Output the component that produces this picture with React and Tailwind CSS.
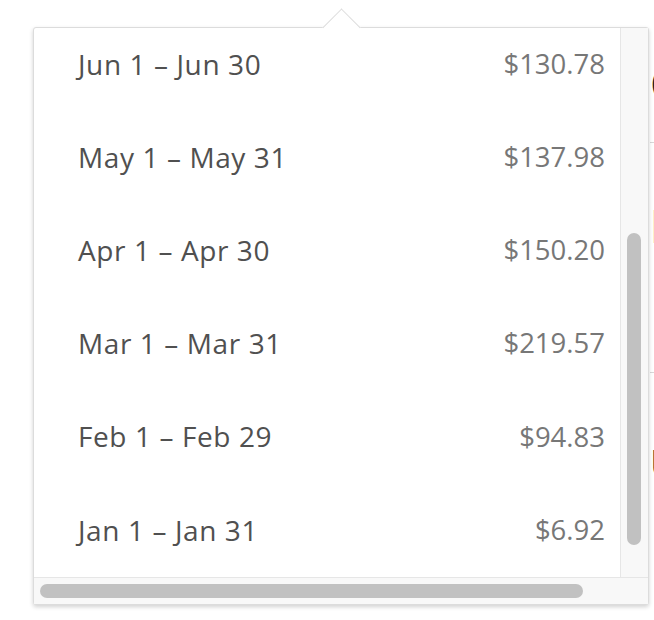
const periods = [
  { range: "Jun 1 – Jun 30", amount: "$130.78" },
  { range: "May 1 – May 31", amount: "$137.98" },
  { range: "Apr 1 – Apr 30", amount: "$150.20" },
  { range: "Mar 1 – Mar 31", amount: "$219.57" },
  { range: "Feb 1 – Feb 29", amount: "$94.83" },
  { range: "Jan 1 – Jan 31", amount: "$6.92" },
];

function BackgroundPage() {
  // the page behind the popover, only its left edge peeks out on the right
  return (
    <div className="flex flex-col pl-[650px] w-[900px] text-[46px] font-bold leading-none text-[#222]">
      <div className="h-[143px] pt-[60px] border-b border-[#d8d8d8] whitespace-nowrap">Cost</div>
      <div className="h-[230px] pt-[59px] border-b border-[#d8d8d8] whitespace-nowrap">Billing</div>
      <div className="pt-[70px] text-[40px] whitespace-nowrap">Usage</div>
    </div>
  );
}

export default function App() {
  return (
    <div
      className="relative w-[654px] h-[620px] overflow-hidden bg-white"
      style={{ fontFamily: '"Open Sans", "Noto Sans", sans-serif' }}
    >
      <BackgroundPage />

      {/* Billing period popover */}
      <div className="absolute left-[33px] top-[27px] w-[616px] h-[578px] bg-white border border-[#dcdcdc] rounded-[3px] shadow-[0_2px_4px_rgba(0,0,0,0.18)] flex flex-col">
        <div className="absolute left-[294px] top-[-14px] w-[27px] h-[27px] rotate-45 bg-white border-l border-t border-[#dcdcdc]" />

        <div className="flex flex-1 min-h-0">
          <div className="flex-1 overflow-hidden">
            <ul className="flex flex-col mt-[-11px]">
              {periods.map((p) => (
                <li
                  key={p.range}
                  className="h-[93.2px] flex items-center justify-between pl-[44px] pr-[15px] leading-none"
                >
                  <span className="text-[28px] tracking-[0.6px] text-[#505050]">{p.range}</span>
                  <span className="text-[27.5px] text-[#777]">{p.amount}</span>
                </li>
              ))}
            </ul>
          </div>
          <div className="w-[28px] bg-[#f8f8f8] border-l border-[#e6e6e6] pt-[205px] pl-[6px]">
            <div className="w-[14px] h-[312px] rounded-full bg-[#c1c1c1]" />
          </div>
        </div>

        <div className="h-[27px] bg-[#f8f8f8] border-t border-[#e6e6e6] flex items-center pl-[6px]">
          <div className="w-[543px] h-[14px] rounded-full bg-[#c1c1c1]" />
        </div>
      </div>
    </div>
  );
}
